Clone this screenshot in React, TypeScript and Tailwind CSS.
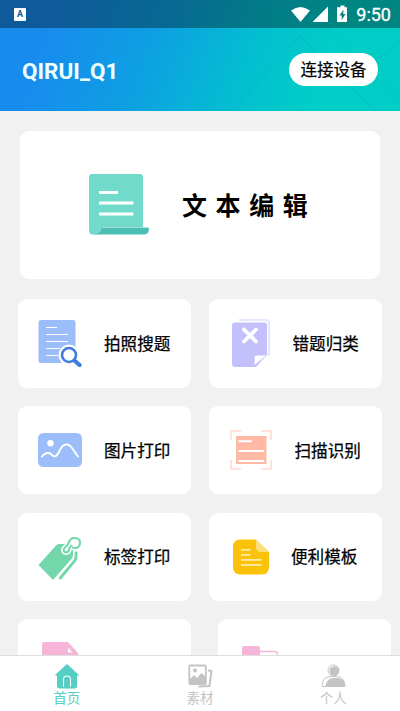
import type { ReactNode } from 'react';

interface Feature {
  label: string;
  icon: ReactNode;
  gap: string;
}

const FEATURES: Feature[] = [
  { label: '拍照搜题', icon: <SearchDocIcon />, gap: 'ml-[22px]' },
  { label: '错题归类', icon: <WrongIcon />, gap: 'ml-[19.5px]' },
  { label: '图片打印', icon: <PictureIcon />, gap: 'ml-[22px]' },
  { label: '扫描识别', icon: <ScanIcon />, gap: 'ml-[21.5px]' },
  { label: '标签打印', icon: <TagIcon />, gap: 'ml-[22px]' },
  { label: '便利模板', icon: <NoteIcon />, gap: 'ml-[18px]' },
];

function SearchDocIcon() {
  return (
    <svg width="44" height="48" viewBox="0 0 44 48" fill="none">
      <rect x="0.5" y="1" width="37" height="43" rx="2.5" fill="#9bbdfa" />
      <path d="M8 8.5h11M8 15.5h22M8 22.5h22M8 29.5h14M8 36.5h12" stroke="#fff" strokeWidth="1.2" />
      <circle cx="31" cy="36" r="10.5" fill="#fff" />
      <path d="M36 41l6 6" stroke="#fff" strokeWidth="7" />
      <circle cx="31" cy="36" r="7" fill="#fff" stroke="#3f7ddb" strokeWidth="2.6" />
      <path d="M37 42l4.500 4" stroke="#3f7ddb" strokeWidth="4.2" strokeLinecap="round" />
    </svg>
  );
}

function WrongIcon() {
  return (
    <svg width="44" height="48" viewBox="0 0 44 48" fill="none">
      <path d="M10 1h27q3 0 3 3v33" stroke="#e6e5fd" strokeWidth="2" />
      <path d="M6 3.5h29q3 0 3 3V36L27 48H6q-3 0-3-3V6.5q0-3 3-3z" fill="#c4c0fc" />
      <path d="M25.5 46V38.5q0-2 2-2H37z" fill="#fff" />
      <path d="M15 10.5l12 12M27 10.5l-12 12" stroke="#fff" strokeWidth="3.8" strokeLinecap="round" />
    </svg>
  );
}

function PictureIcon() {
  return (
    <svg width="44" height="48" viewBox="0 0 44 48" fill="none">
      <rect x="0" y="7" width="44" height="34" rx="5.5" fill="#9bbdfa" />
      <circle cx="12.5" cy="17.3" r="3.2" fill="#fff" />
      <path d="M4 30.5c4-5 8-4 10-1.500 3 3 5 1 8-5 3.500-7.500 9-6.500 12-2 2.500 3.500 4 6 6 8.500" stroke="#fff" strokeWidth="1.9" strokeLinecap="round" />
    </svg>
  );
}

function ScanIcon() {
  return (
    <svg width="44" height="48" viewBox="0 0 44 48" fill="none">
      <path d="M2 14V5h10M32 5h10v9M42 34v9H32M12 43H2v-9" stroke="#ffe3da" strokeWidth="2" />
      <rect x="7" y="10" width="30.5" height="28" fill="#ffb9a5" />
      <path d="M10 15.300h12M10 25h24.500M10 35h24.500" stroke="#fff" strokeWidth="1.9" strokeLinecap="round" />
    </svg>
  );
}

function TagIcon() {
  return (
    <svg width="44" height="48" viewBox="0 0 44 48" fill="none">
      <path d="M0.5 32L18 12.500q1.300-1.500 3-1.500h10q3.500 0 4 3.500v7.500q0 2-1.500 4L15 47z" fill="#73d7ab" />
      <path d="M38 18.500v6q0 2-1.500 3.500L21.500 46" stroke="#73d7ab" strokeWidth="2.8" />
      <path d="M32 13.500c-.5 3-1 6-4 6-3-.5-3-3.500-1-5 2-1.500 3-2 4-5.500 2-6 11.500-5 11 1.500-.5 4.500-5 5.500-8 3.500" stroke="#fff" strokeWidth="5" />
      <path d="M32 13.500c-.5 3-1 6-4 6-3-.5-3-3.500-1-5 2-1.500 3-2 4-5.500 2-6 11.500-5 11 1.500-.5 4.500-5 5.500-8 3.500" stroke="#73d7ab" strokeWidth="2.100" />
    </svg>
  );
}

function NoteIcon() {
  return (
    <svg width="44" height="48" viewBox="0 0 44 48" fill="none">
      <path d="M11 6.500h16L40 19v15q0 7.500-7.500 7.500H11.500Q4 41.500 4 34V14q0-7.500 7-7.500z" fill="#fbc20a" />
      <path d="M27 6.500L40 19h-8q-5 0-5-5z" fill="#fddf7c" />
      <path d="M12 16.800h9.500M12 21.800h9.500M12 26.800h20.500M12 31.800h20.500" stroke="#fee9a5" strokeWidth="1.8" />
    </svg>
  );
}

function TextDocIcon() {
  return (
    <svg width="62" height="64" viewBox="0 0 62 64" fill="none">
      <path d="M3 1h48q3 0 3 3v50H14l-6 7.500H4q-4 0-4-4V4q0-3 3-3z" fill="#72dacb" />
      <path d="M13 54.500h45.500q1.500 0 1.500 1.500 0 5.500-5.500 5.500H4q7-.500 9-7z" fill="#4bbfb3" />
      <path d="M10 19.500h19M10 30h34.500M10 41h34.500" stroke="#fff" strokeWidth="3.2" />
    </svg>
  );
}

function StatusBar() {
  return (
    <div className="flex h-7 items-center bg-black/35 pl-[14px] pr-[9px]">
      <div className="flex h-[13px] w-3 items-center justify-center rounded-[1px] bg-white text-[9px] font-bold leading-none text-[#155d94]">
        A
      </div>
      <svg className="ml-auto" width="58" height="20" viewBox="0 0 58 20" fill="#fff">
        <path d="M0 6.500q9.500-7 19 0L9.500 18z" />
        <path d="M37 2.500V18H21.500z" />
        <path d="M49.500 1.500h4v1.700h2.500V18H46V3.200h3.500z" />
        <path d="M52.500 5.500L48.500 11.500h2.200v4.500l3.800-6h-2.300z" fill="#087f84" />
      </svg>
      <span className="ml-[7px] mt-[2px] text-[18px] leading-none text-white [-webkit-text-stroke:0.3px]">9:50</span>
    </div>
  );
}

function Header() {
  return (
    <header className="relative h-[111px] bg-[linear-gradient(110deg,#188bee_12%,#0da0e2_38%,#03bfd0_62%,#00cec6_80%)]">
      <svg className="absolute inset-0" width="400" height="111" viewBox="0 0 400 111" fill="none">
        <path d="M230 111l70-75 75 75M326 28l78 78M378 60l22-19" stroke="#00b5c4" strokeOpacity="0.35" strokeWidth="1.5" />
      </svg>
      <div className="relative">
        <StatusBar />
        <div className="flex h-[83px] items-center justify-between px-[22px]">
          <h1 className="mt-1 text-[22.5px] font-bold text-[#ecffff]">QIRUI_Q1</h1>
          <button className="h-[33px] w-[89px] rounded-full bg-white pt-[3px] text-[16.5px] leading-none text-black [-webkit-text-stroke:0.2px]">
            连接设备
          </button>
        </div>
      </div>
    </header>
  );
}

function FeatureCard({ label, icon, gap }: Feature) {
  return (
    <div className="flex items-center rounded-[9px] bg-white pl-5">
      {icon}
      <span className={`${gap} mt-1 whitespace-nowrap text-[16.6px] leading-none text-black [-webkit-text-stroke:0.25px]`}>{label}</span>
    </div>
  );
}

function TabBar() {
  return (
    <nav className="grid h-14 shrink-0 grid-cols-3 border-t border-[#dedede] bg-white text-[13.5px] leading-none text-[#c4c4c4]">
      <div className="flex flex-col items-center pt-2 text-[#55cec3]">
        <svg width="26" height="26" viewBox="0 0 26 26" fill="none">
          <path d="M13 0l12.500 11.500H23V22q0 2.500-2.500 2.500h-15Q3 24.500 3 22V11.500H.5z" fill="currentColor" />
          <path d="M9.500 22.500v-7q0-3.500 3.500-3.500t3.500 3.500v7" stroke="#fff" strokeWidth="1.1" />
        </svg>
        <span className="mt-[2px]">首页</span>
      </div>
      <div className="flex flex-col items-center pt-2">
        <svg width="26" height="26" viewBox="0 0 26 26" fill="none">
          <rect x="2.3" y="1.500" width="16.5" height="18.500" rx="1" stroke="currentColor" strokeWidth="1.8" />
          <path d="M3 15l4-4 3 3 4.500-5 4 3.500V20H3z" fill="currentColor" />
          <circle cx="8" cy="6.500" r="2" fill="currentColor" />
          <path d="M21 6.500l3.500.5L22.500 22l-11 .5" stroke="currentColor" strokeWidth="2" />
        </svg>
        <span className="mt-[2px]">素材</span>
      </div>
      <div className="flex flex-col items-center pt-2">
        <svg width="26" height="26" viewBox="0 0 26 26" fill="none">
          <circle cx="13.5" cy="6.500" r="5.5" stroke="currentColor" />
          <circle cx="14.3" cy="7" r="4.8" fill="currentColor" />
          <path d="M2 22.500q0-10 9-10h5q9 0 9 10z" stroke="currentColor" />
          <path d="M5.500 22.500q1-8.500 8-8.500h4q7 0 7.500 8.500z" fill="currentColor" />
        </svg>
        <span className="mt-[2px]">个人</span>
      </div>
    </nav>
  );
}

export default function App() {
  return (
    <div className="flex h-[711px] w-[400px] flex-col overflow-hidden bg-[#f1f1f1] font-[Roboto,'Noto_Sans_CJK_SC',sans-serif]">
      <Header />

      <main className="min-h-0 flex-1 overflow-hidden">
        <div className="mx-5 mt-5 flex h-[148px] items-center rounded-[9px] bg-white pl-[69px]">
          <TextDocIcon />
          <span className="ml-[31px] mt-1 whitespace-nowrap text-[25px] font-bold tracking-[8.6px] text-black">文本编辑</span>
        </div>

        <div className="mx-[18px] mt-5 grid auto-rows-[88.5px] grid-cols-2 gap-x-[18px] gap-y-[18.25px]">
          {FEATURES.map(f => (
            <FeatureCard key={f.label} {...f} />
          ))}
          {/* Bottom row runs under the tab bar */}
          <div className="rounded-[9px] bg-white pl-6 pt-[22px]">
            <svg width="36" height="44" viewBox="0 0 36 44">
              <path d="M2 1h24l10 11v32H0V3q0-2 2-2z" fill="#f7b4d9" />
              <path d="M26 6.500v5h4.500z" fill="#fff" />
            </svg>
          </div>
          <div className="translate-x-[9px] rounded-[9px] bg-white pl-6 pt-[22px]">
            <svg width="37" height="44" viewBox="0 0 37 44" fill="none">
              <path d="M18 10.500h15q2.500 0 2.500 2.500v25H18" stroke="#f7b4d9" strokeWidth="1.3" />
              <rect x="0" y="5" width="18" height="20" rx="2" fill="#f7b4d9" />
            </svg>
          </div>
        </div>
      </main>

      <TabBar />
    </div>
  );
}
